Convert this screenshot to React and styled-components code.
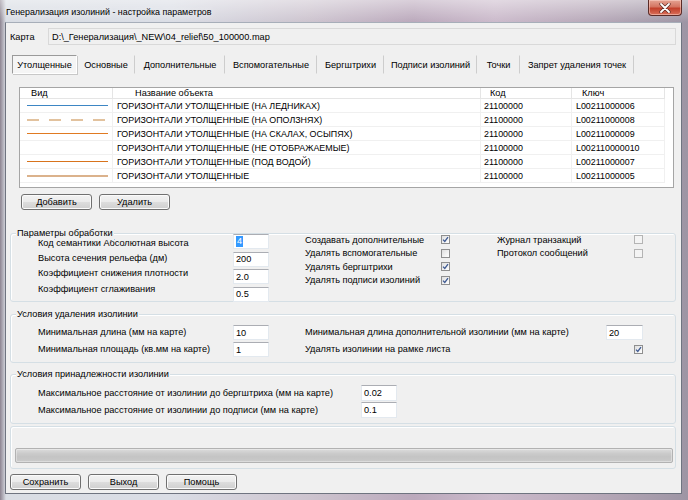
import React from 'react'
import styled, { createGlobalStyle } from 'styled-components'

const GlobalStyle = createGlobalStyle`
  html, body {
    margin: 0;
    padding: 0;
  }
  body {
    font-family: "Liberation Sans", Arial, sans-serif;
    font-size: 9.2px;
    color: #000;
  }
`

const Window = styled.div`
  width: 688px;
  height: 500px;
  box-sizing: border-box;
  display: flex;
  flex-direction: column;
  padding: 0 6px 6px 5px;
  background:
    linear-gradient(180deg, rgba(255, 255, 255, 0.45), rgba(255, 255, 255, 0) 22px),
    linear-gradient(90deg, #8d8491 0px, #d9dde4 6px, #dadde5 25%, #cdc4cf 45%, #bba9bc 60%, #cbbacb 72%, #b8a9b9 86%, #9d95a4 100%);
`

const TitleBar = styled.div`
  height: 22px;
  display: flex;
  align-items: flex-start;
  justify-content: space-between;
  padding-left: 1px;
`

const Title = styled.span`
  line-height: 24px;
  font-size: 8.9px;
  color: #000;
  text-shadow: 0 0 6px rgba(255, 255, 255, 0.9);
`

const CloseButton = styled.div`
  width: 34px;
  height: 16px;
  box-sizing: border-box;
  border: 1px solid #5b2b27;
  border-top: none;
  border-radius: 0 0 4px 4px;
  background: linear-gradient(180deg, #e5a393 0%, #d47562 45%, #c2402b 55%, #d9705a 100%);
  box-shadow: inset 0 0 0 1px rgba(255, 220, 210, 0.5);
  display: flex;
  align-items: center;
  justify-content: center;
`

const Client = styled.div`
  flex: 1;
  display: flex;
  flex-direction: column;
  background: #f0f0f0;
  border: 1px solid #6f7480;
  border-top-color: #a7aeb9;
`

const MapRow = styled.div`
  margin-top: 5px;
  height: 17px;
  display: flex;
  align-items: center;
  padding-left: 4px;
`

const MapLabel = styled.span`
  width: 38px;
`

const MapPath = styled.div`
  flex: 1;
  height: 17px;
  margin-right: 5px;
  box-sizing: border-box;
  border: 1px solid #d9d9d9;
  background: #f0f0f0;
  padding-left: 3px;
  display: flex;
  align-items: center;
`

const Toolbar = styled.div`
  margin-top: 10px;
  height: 19px;
  display: flex;
  padding-left: 6px;
`

const Tab = styled.div`
  width: ${p => p.$w}px;
  box-sizing: border-box;
  display: flex;
  align-items: center;
  justify-content: center;
  border: 1px solid transparent;
  border-right: 1px solid ${p => (p.$active ? '#ffffff' : '#cdcdcd')};
  ${p =>
    p.$active &&
    `
    border-color: #9a9a9a #ffffff #ffffff #9a9a9a;
    background: #f5f5f5;
    box-shadow: 1px 1px 0 #c8c8c8;
  `}
`

const Table = styled.div`
  margin: 13px 7px 0 13px;
  height: 101px;
  box-sizing: border-box;
  border: 1px solid #a5a5a5;
  background: #fff;
  display: grid;
  grid-template-columns: 93px 368px 91px 93px 1fr;
  grid-template-rows: 11px repeat(6, 14px);
  align-content: start;
  font-size: 8.9px;
`

const HeadCell = styled.div`
  box-sizing: border-box;
  border-right: ${p => (p.$filler ? 'none' : '1px solid #e5e5e5')};
  border-bottom: ${p => (p.$filler ? 'none' : '1px solid #e5e5e5')};
  padding-left: ${p => p.$pad || 0}px;
  line-height: 10px;
  white-space: nowrap;
  font-size: 9.2px;
`

const Cell = styled.div`
  box-sizing: border-box;
  border-right: ${p => (p.$filler ? 'none' : '1px solid #f0f0f0')};
  border-bottom: ${p => (p.$filler ? 'none' : '1px solid #f0f0f0')};
  padding-left: ${p => p.$pad || 0}px;
  padding-right: ${p => p.$padR || 0}px;
  display: flex;
  align-items: center;
  white-space: nowrap;
  overflow: hidden;
`

const LineSample = styled.div`
  flex: 1;
  height: ${p => p.$w}px;
  background: ${p =>
    p.$dashed
      ? `repeating-linear-gradient(90deg, ${p.$color} 0 12px, transparent 12px 22px)`
      : p.$color};
`

const ButtonRow = styled.div`
  display: flex;
  gap: 7px;
  margin-top: ${p => p.$top}px;
  margin-left: ${p => p.$left}px;
`

const Button = styled.button`
  width: 71px;
  height: 16px;
  box-sizing: border-box;
  padding: 0;
  font-family: inherit;
  font-size: 9.2px;
  color: #000;
  border: 1px solid #707070;
  border-radius: 3px;
  background: linear-gradient(180deg, #f2f2f2 0%, #ebebeb 48%, #dddddd 52%, #cfcfcf 100%);
  box-shadow: inset 0 0 0 1px #fbfbfb;
`

const Group = styled.div`
  position: relative;
  margin: ${p => p.$top}px 5px 0 4px;
  height: ${p => p.$h}px;
  box-sizing: border-box;
  border: 1px solid #d5dfe5;
  border-radius: 3px;
  box-shadow: inset 1px 1px 0 #ffffff;
  padding-top: ${p => p.$padTop || 0}px;
`

const Caption = styled.span`
  position: absolute;
  top: -7px;
  left: 5px;
  padding: 0 1px;
  line-height: 13px;
  background: #f0f0f0;
`

const ParamsLayout = styled.div`
  display: flex;
  padding-left: 27px;
`

const LabelColumn = styled.div`
  width: 195px;
  padding-top: 3px;
  display: flex;
  flex-direction: column;
  gap: 2.2px;
`

const Label = styled.span`
  line-height: 13px;
  white-space: nowrap;
`

const InputColumn = styled.div`
  display: flex;
  flex-direction: column;
  gap: 2.67px;
`

const Field = styled.div`
  width: ${p => p.$w || 36}px;
  height: ${p => p.$h || 15}px;
  box-sizing: border-box;
  border: 1px solid #e3e9ef;
  border-top-color: #abadb3;
  background: #fff;
  padding-left: 2px;
  display: flex;
  align-items: center;
`

const Selected = styled.span`
  background: #3399ff;
  color: #fff;
  padding: 0 1px;
  line-height: 11px;
`

const CheckColumn = styled.div`
  margin-left: ${p => p.$left}px;
  margin-top: -1px;
  display: flex;
  flex-direction: column;
`

const CheckRow = styled.div`
  height: 13.5px;
  width: ${p => p.$w}px;
  display: flex;
  align-items: center;
  justify-content: ${p => (p.$end ? 'flex-end' : 'space-between')};
  white-space: nowrap;
`

const Box = styled.span`
  width: 9px;
  height: 9px;
  box-sizing: border-box;
  border: 1px solid ${p => (p.$disabled ? '#b4b4b4' : '#8f8f8f')};
  background: ${p =>
    p.$disabled ? '#f4f4f4' : 'linear-gradient(135deg, #dedede 0%, #f6f6f6 70%, #ffffff 100%)'};
  display: flex;
  align-items: center;
  justify-content: center;
  flex-shrink: 0;
`

const Grid = styled.div`
  display: grid;
  grid-template-columns: ${p => p.$cols};
  grid-template-rows: ${p => p.$rows};
  row-gap: ${p => p.$gap}px;
  padding-left: 27px;
  align-items: center;
`

const Status = styled(Group)`
  padding: 21px 2px 0 4px;
`

const Progress = styled.div`
  height: 15px;
  box-sizing: border-box;
  border: 1px solid #b2b2b2;
  border-radius: 2px;
  background: linear-gradient(180deg, #dcdcdc 0%, #cbcbcb 35%, #c4c4c4 60%, #cacaca 100%);
  box-shadow: inset 0 0 0 1px rgba(255, 255, 255, 0.35);
`

const tabs = [
  ['Утолщенные', 65],
  ['Основные', 58],
  ['Дополнительные', 90],
  ['Вспомогательные', 92],
  ['Бергштрихи', 67],
  ['Подписи изолиний', 93],
  ['Точки', 43],
  ['Запрет удаления точек', 114],
]

const rows = [
  { color: '#3d86c4', w: 1, name: 'ГОРИЗОНТАЛИ УТОЛЩЕННЫЕ (НА ЛЕДНИКАХ)', key: 'L00211000006' },
  { color: '#e2c29e', w: 2, dashed: true, name: 'ГОРИЗОНТАЛИ УТОЛЩЕННЫЕ (НА ОПОЛЗНЯХ)', key: 'L00211000008' },
  { color: '#e07a22', w: 1, name: 'ГОРИЗОНТАЛИ УТОЛЩЕННЫЕ (НА СКАЛАХ, ОСЫПЯХ)', key: 'L00211000009' },
  { color: null, w: 1, name: 'ГОРИЗОНТАЛИ УТОЛЩЕННЫЕ (НЕ ОТОБРАЖАЕМЫЕ)', key: 'L002110000010' },
  { color: '#d8731c', w: 1, name: 'ГОРИЗОНТАЛИ УТОЛЩЕННЫЕ (ПОД ВОДОЙ)', key: 'L00211000007' },
  { color: '#dbb28c', w: 2, name: 'ГОРИЗОНТАЛИ УТОЛЩЕННЫЕ', key: 'L00211000005' },
]

const Check = ({ checked, disabled }) => (
  <Box $disabled={disabled}>
    {checked && (
      <svg width="7" height="7" viewBox="0 0 7 7">
        <path d="M1 3.6 L2.8 5.5 L6 1.2" fill="none" stroke="#3f5a92" strokeWidth="1.3" />
      </svg>
    )}
  </Box>
)

export default function App() {
  return (
    <Window>
      <GlobalStyle />
      <TitleBar>
        <Title>Генерализация изолиний - настройка параметров</Title>
        <CloseButton>
          <svg width="12" height="10" viewBox="0 0 12 10">
            <path d="M2 1 L10 9 M10 1 L2 9" stroke="#5a2a24" strokeWidth="3.2" strokeLinecap="round" />
            <path d="M2 1 L10 9 M10 1 L2 9" stroke="#ffffff" strokeWidth="1.8" strokeLinecap="round" />
          </svg>
        </CloseButton>
      </TitleBar>
      <Client>
        <MapRow>
          <MapLabel>Карта</MapLabel>
          <MapPath>D:\_Генерализация\_NEW\04_relief\50_100000.map</MapPath>
        </MapRow>

        <Toolbar>
          {tabs.map(([label, w], i) => (
            <Tab key={label} $w={w} $active={i === 0}>
              {label}
            </Tab>
          ))}
        </Toolbar>

        <Table>
          <HeadCell $pad={11}>Вид</HeadCell>
          <HeadCell $pad={22}>Название объекта</HeadCell>
          <HeadCell $pad={9}>Код</HeadCell>
          <HeadCell $pad={10}>Ключ</HeadCell>
          <HeadCell $filler />
          {rows.map(r => (
            <React.Fragment key={r.key}>
              <Cell $pad={7} $padR={4}>
                {r.color && <LineSample $color={r.color} $w={r.w} $dashed={r.dashed} />}
              </Cell>
              <Cell $pad={4}>{r.name}</Cell>
              <Cell $pad={3}>21100000</Cell>
              <Cell $pad={4}>{r.key}</Cell>
              <Cell $filler />
            </React.Fragment>
          ))}
        </Table>

        <ButtonRow $top={6} $left={15}>
          <Button>Добавить</Button>
          <Button>Удалить</Button>
        </ButtonRow>

        <Group $top={23} $h={69}>
          <Caption>Параметры обработки</Caption>
          <ParamsLayout>
            <LabelColumn>
              <Label>Код семантики Абсолютная высота</Label>
              <Label>Высота сечения рельефа (дм)</Label>
              <Label>Коэффициент снижения плотности</Label>
              <Label>Коэффициент сглаживания</Label>
            </LabelColumn>
            <InputColumn>
              <Field>
                <Selected>4</Selected>
              </Field>
              <Field>200</Field>
              <Field>2.0</Field>
              <Field>0.5</Field>
            </InputColumn>
            <CheckColumn $left={36}>
              <CheckRow $w={145}>
                Создавать дополнительные <Check checked />
              </CheckRow>
              <CheckRow $w={145}>
                Удалять вспомогательные <Check />
              </CheckRow>
              <CheckRow $w={145}>
                Удалять бергштрихи <Check checked />
              </CheckRow>
              <CheckRow $w={145}>
                Удалять подписи изолиний <Check checked />
              </CheckRow>
            </CheckColumn>
            <CheckColumn $left={47}>
              <CheckRow $w={146}>
                Журнал транзакций <Check disabled />
              </CheckRow>
              <CheckRow $w={146}>
                Протокол сообщений <Check disabled />
              </CheckRow>
            </CheckColumn>
          </ParamsLayout>
        </Group>

        <Group $top={12} $h={49} $padTop={10}>
          <Caption>Условия удаления изолинии</Caption>
          <Grid $cols="195px 36px 36px 301px 37px" $rows="15px 15px" $gap={2}>
            <Label>Минимальная длина (мм на карте)</Label>
            <Field>10</Field>
            <span />
            <Label>Минимальная длина дополнительной изолинии (мм на карте)</Label>
            <Field $w={37}>20</Field>
            <Label>Минимальная площадь (кв.мм на карте)</Label>
            <Field>1</Field>
            <span />
            <Label>Удалять изолинии на рамке листа</Label>
            <CheckRow $w={37} $end>
              <Check checked />
            </CheckRow>
          </Grid>
        </Group>

        <Group $top={11} $h={50} $padTop={10}>
          <Caption>Условия принадлежности изолинии</Caption>
          <Grid $cols="323px 36px" $rows="16px 16px" $gap={1}>
            <Label>Максимальное расстояние от изолинии до бергштриха (мм на карте)</Label>
            <Field $h={16}>0.02</Field>
            <Label>Максимальное расстояние от изолинии до подписи (мм на карте)</Label>
            <Field $h={16}>0.1</Field>
          </Grid>
        </Group>

        <Status $top={2} $h={43}>
          <Progress />
        </Status>

        <ButtonRow $top={5} $left={4}>
          <Button>Сохранить</Button>
          <Button>Выход</Button>
          <Button>Помощь</Button>
        </ButtonRow>
      </Client>
    </Window>
  )
}
